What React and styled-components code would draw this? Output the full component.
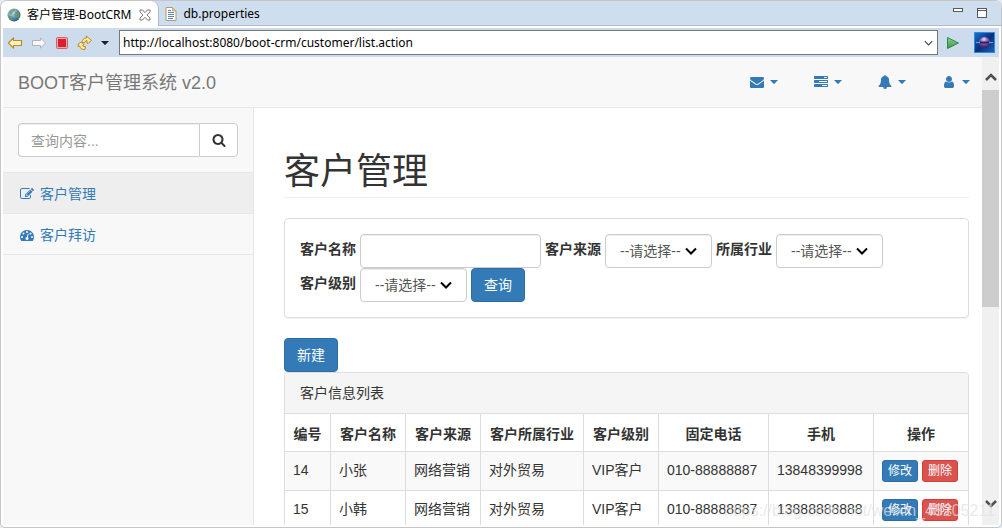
import React, { useState } from 'react'
import styled, { createGlobalStyle } from 'styled-components'

const uiFont = '"Noto Sans", "Noto Sans CJK SC", sans-serif'
const pageFont = '"Liberation Sans", Arial, "Noto Sans CJK SC", sans-serif'

const paths = {
  envelope:
    'M1792 710v794q0 66-47 113t-113 47h-1472q-66 0-113-47t-47-113v-794q44 49 101 87 362 246 497 345 57 42 92.5 65.5t94.5 48 110 24.5h2q51 0 110-24.5t94.5-48 92.5-65.5q170-123 498-345 57-39 100-87zm0-294q0 79-49 151t-122 123q-376 261-468 325-10 7-42.5 31t-54 38.5-52 32.5-57.5 27-50 9h-2q-23 0-50-9t-57.5-27-52-32.5-54-38.5-42.5-31q-91-64-262-182.5t-205-142.5q-62-42-117-115.5t-55-136.5q0-78 41.5-130t118.5-52h1472q65 0 112.5 47t47.5 113z',
  tasks:
    'M1024 1408h640v-128h-640v128zm-384-512h1024v-128h-1024v128zm640-512h384v-128h-384v128zm512 832v256q0 26-19 45t-45 19h-1664q-26 0-45-19t-19-45v-256q0-26 19-45t45-19h1664q26 0 45 19t19 45zm0-512v256q0 26-19 45t-45 19h-1664q-26 0-45-19t-19-45v-256q0-26 19-45t45-19h1664q26 0 45 19t19 45zm0-512v256q0 26-19 45t-45 19h-1664q-26 0-45-19t-19-45v-256q0-26 19-45t45-19h1664q26 0 45 19t19 45z',
  bell:
    'M912 1696q0-16-16-16-59 0-101.5-42.5t-42.5-101.5q0-16-16-16t-16 16q0 73 51.5 124.5t124.5 51.5q16 0 16-16zm816-288q0 52-38 90t-90 38h-448q0 106-75 181t-181 75-181-75-75-181h-448q-52 0-90-38t-38-90q50-42 91-88t85-119.5 74.5-158.5 50-206 19.5-260q0-152 117-282.5t307-158.5q-8-19-8-39 0-40 28-68t68-28 68 28 28 68q0 20-8 39 190 28 307 158.5t117 282.5q0 139 19.5 260t50 206 74.5 158.5 85 119.5 91 88z',
  user:
    'M1536 1399q0 109-62.5 187t-150.5 78h-854q-88 0-150.5-78t-62.5-187q0-85 8.5-160.5t31.5-152 58.5-131 94-89 134.5-34.5q131 128 313 128t313-128q76 0 134.5 34.5t94 89 58.5 131 31.5 152 8.5 160.5zm-256-887q0 159-112.5 271.5t-271.5 112.5-271.5-112.5-112.5-271.5 112.5-271.5 271.5-112.5 271.5 112.5 112.5 271.5z',
  edit:
    'M888 1184l116-116-152-152-116 116v56h96v96h56zm440-720q-16-16-33 1l-350 350q-17 17-1 33t33-1l350-350q17-17 1-33zm80 594v190q0 119-84.5 203.5t-203.5 84.5h-832q-119 0-203.5-84.5t-84.5-203.5v-832q0-119 84.5-203.5t203.5-84.5h832q63 0 117 25 15 7 18 23 3 17-9 29l-49 49q-14 14-32 8-23-6-45-6h-832q-66 0-113 47t-47 113v832q0 66 47 113t113 47h832q66 0 113-47t47-113v-126q0-13 9-22l64-64q15-15 35-7t20 29zm-96-738l288 288-672 672h-288v-288zm444 132l-92 92-288-288 92-92q28-28 68-28t68 28l152 152q28 28 28 68t-28 68z',
  dashboard:
    'M384 1152q0-53-37.5-90.5t-90.5-37.5-90.5 37.5-37.5 90.5 37.5 90.5 90.5 37.5 90.5-37.5 37.5-90.5zm192-448q0-53-37.5-90.5t-90.5-37.5-90.5 37.5-37.5 90.5 37.5 90.5 90.5 37.5 90.5-37.5 37.5-90.5zm428 481l101-382q6-26-7.5-48.5t-38.5-29.5-48 6.5-30 39.5l-101 382q-60 5-107 43.5t-63 98.5q-20 77 20 146t117 89 146-20 89-117q16-60-6-117t-72-91zm660-33q0-53-37.5-90.5t-90.5-37.5-90.5 37.5-37.5 90.5 37.5 90.5 90.5 37.5 90.5-37.5 37.5-90.5zm-640-640q0-53-37.5-90.5t-90.5-37.5-90.5 37.5-37.5 90.5 37.5 90.5 90.5 37.5 90.5-37.5 37.5-90.5zm448 192q0-53-37.5-90.5t-90.5-37.5-90.5 37.5-37.5 90.5 37.5 90.5 90.5 37.5 90.5-37.5 37.5-90.5zm320 448q0 261-141 483-19 29-54 29h-1402q-35 0-54-29-141-221-141-483 0-182 71-348t191-286 286-191 348-71 348 71 286 191 191 286 71 348z',
  search:
    'M1216 832q0-185-131.5-316.5t-316.5-131.5-316.5 131.5-131.5 316.5 131.5 316.5 316.5 131.5 316.5-131.5 131.5-316.5zm512 832q0 52-38 90t-90 38q-54 0-90-38l-343-342q-179 124-399 124-143 0-273.5-55.5t-225-150-150-225-55.5-273.5 55.5-273.5 150-225 225-150 273.5-55.5 273.5 55.5 225 150 150 225 55.5 273.5q0 220-124 399l343 343q37 37 37 90z',
}

const Icon = ({ name }) => (
  <svg width="14" height="14" viewBox="0 0 1792 1792" fill="currentColor" aria-hidden="true">
    <path d={paths[name]} />
  </svg>
)

const Caret = ({ size = 8 }) => (
  <svg width={size} height={size / 2} viewBox="0 0 8 4" fill="currentColor" aria-hidden="true">
    <path d="M0 0h8L4.400 3.800q-0.400 0.300-0.800 0z" />
  </svg>
)

const Globe = () => (
  <svg width="14" height="14" viewBox="0 0 14 14" aria-hidden="true">
    <defs>
      <radialGradient id="sea" cx="0.35" cy="0.3" r="0.75">
        <stop offset="0" stopColor="#d8ecf6" />
        <stop offset="0.45" stopColor="#6fa3c8" />
        <stop offset="1" stopColor="#2c5480" />
      </radialGradient>
    </defs>
    <circle cx="7" cy="7" r="6.5" fill="url(#sea)" />
    <path d="M2 3.5Q4 1 7 1l1 1.500-2 1.500-1 2-2 1zM8.500 4l3 .5 1.300 3-1.500 3.500-2-2-1.800-2zM3 8l2.500 1 .5 2-1 1.500Q2.500 11 2 9z" fill="#6f9a55" opacity="0.8" />
  </svg>
)

const FileIcon = () => (
  <svg width="12" height="14" viewBox="0 0 12 14" aria-hidden="true">
    <path d="M1 .5h6.500l3.500 3.500v9.500H1z" fill="#fdfdf6" stroke="#b09c6c" />
    <path d="M7.500 .5v3.500H11z" fill="#e9d9a4" stroke="#b09c6c" strokeWidth="0.7" />
    <path d="M3 3.500h3M3 5.500h6M3 7.500h6M3 9.500h6M3 11.500h5" stroke="#5d82c0" />
  </svg>
)

const CloseIcon = () => (
  <svg width="12" height="12" viewBox="0 0 12 12" fill="#fff" stroke="#6b6b6b" strokeWidth="0.9" aria-hidden="true">
    <path d="M1 1h2.500L6 3.700 8.500 1H11v2L8 6l3 3v2H8.500L6 8.300 3.500 11H1V9l3-3-3-3z" />
  </svg>
)

const Arrow = ({ forward }) => (
  <svg width="16" height="14" viewBox="0 0 16 14" aria-hidden="true">
    {forward ? (
      <path d="M14.500 7L9.500 1.800V4.500H1.500V9.500H9.500V12.200z" fill="#f7f7f7" stroke="#b0b4b8" strokeLinejoin="round" />
    ) : (
      <path d="M1.500 7L6.500 1.800V4.500H14.500V9.500H6.500V12.200z" fill="#fff3c4" stroke="#c08a1e" strokeWidth="1.200" strokeLinejoin="round" />
    )}
  </svg>
)

const StopIcon = () => (
  <svg width="14" height="14" viewBox="0 0 14 14" aria-hidden="true">
    <rect x="1.500" y="1.500" width="11" height="11" rx="1" fill="#f3a7ab" stroke="#c9676c" />
    <rect x="3" y="3" width="8" height="8" fill="#dc1f2d" />
  </svg>
)

const RefreshIcon = () => (
  <svg width="16" height="16" viewBox="0 0 16 16" fill="#ffe9a3" stroke="#c08a1e" strokeLinejoin="round" aria-hidden="true">
    <path d="M5 7.500Q5.500 3 9.500 3L9.300 1l2.200 1.800L14.500 5.500 11.500 8 10 8.500 10 5.500Q8 5.500 7.500 7.800z" />
    <path d="M1.500 8.500L4.500 7l2.500 3-1.500.5Q6 12 8.500 11.500l-.5 3Q3.500 15 2.800 11L1 11.500z" />
  </svg>
)

const PlayIcon = () => (
  <svg width="14" height="14" viewBox="0 0 14 14" aria-hidden="true">
    <defs>
      <linearGradient id="go" x1="0" y1="0" x2="0" y2="1">
        <stop offset="0" stopColor="#8fd08e" />
        <stop offset="1" stopColor="#37974c" />
      </linearGradient>
    </defs>
    <path d="M1.500 1.500L12.500 7 1.500 12.500z" fill="url(#go)" stroke="#2f8a48" strokeLinejoin="round" />
  </svg>
)

const EclipseIcon = () => (
  <svg width="21" height="21" viewBox="0 0 21 21" aria-hidden="true">
    <defs>
      <linearGradient id="space" x1="0" y1="0" x2="1" y2="1">
        <stop offset="0" stopColor="#1677d2" />
        <stop offset="0.5" stopColor="#0c2f7c" />
        <stop offset="1" stopColor="#1467c0" />
      </linearGradient>
      <radialGradient id="planet" cx="0.45" cy="0.2" r="0.9">
        <stop offset="0" stopColor="#e8d8f4" />
        <stop offset="0.35" stopColor="#8163b5" />
        <stop offset="1" stopColor="#24124f" />
      </radialGradient>
    </defs>
    <rect x="0.500" y="0.500" width="20" height="20" fill="url(#space)" stroke="#2b8be0" />
    <circle cx="10.500" cy="10.500" r="5.500" fill="url(#planet)" />
    <path d="M2 10.500h17" stroke="#8f9fe0" strokeWidth="0.9" />
    <path d="M6 10.500h9" stroke="#2a1658" strokeWidth="1.600" />
  </svg>
)

const Chevron = ({ width = 12, height = 8, stroke = '#000', strokeWidth = 2, up }) => (
  <svg width={width} height={height} viewBox="0 0 12 8" fill="none" stroke={stroke} strokeWidth={strokeWidth} aria-hidden="true">
    <path d={up ? 'M1 6.500L6 1.500l5 5' : 'M1 1.500L6 6.500l5-5'} />
  </svg>
)

const topLinks = [
  { key: 'envelope', label: '消息' },
  { key: 'tasks', label: '任务' },
  { key: 'bell', label: '通知' },
  { key: 'user', label: '用户' },
]

const menu = [
  { key: 'customer', label: '客户管理', icon: 'edit' },
  { key: 'visit', label: '客户拜访', icon: 'dashboard' },
]

const columns = [
  { label: '编号', width: 46 },
  { label: '客户名称', width: 75 },
  { label: '客户来源', width: 75 },
  { label: '客户所属行业', width: 103 },
  { label: '客户级别', width: 75 },
  { label: '固定电话', width: 110 },
  { label: '手机', width: 105 },
  { label: '操作', width: 94 },
]

const customers = [
  { id: 14, name: '小张', source: '网络营销', industry: '对外贸易', level: 'VIP客户', phone: '010-88888887', mobile: '13848399998' },
  { id: 15, name: '小韩', source: '网络营销', industry: '对外贸易', level: 'VIP客户', phone: '010-88888887', mobile: '13888888888' },
]

const SelectField = ({ id, label }) => (
  <Field>
    <FieldLabel htmlFor={id}>{label}</FieldLabel>
    <SelectWrap>
      <Select id={id}>
        <option>--请选择--</option>
      </Select>
      <Chevron />
    </SelectWrap>
  </Field>
)

const EditorTabs = () => (
  <TabBar>
    <Tab $active>
      <Globe />
      <span>客户管理-BootCRM</span>
      <CloseIcon />
    </Tab>
    <Tab>
      <FileIcon />
      <span>db.properties</span>
    </Tab>
    <WindowButtons>
      <MinButton type="button" aria-label="最小化" />
      <MaxButton type="button" aria-label="最大化" />
    </WindowButtons>
  </TabBar>
)

const BrowserBar = () => {
  const [url, setUrl] = useState('http://localhost:8080/boot-crm/customer/list.action')
  return (
    <Toolbar>
      <ToolButton type="button" aria-label="后退"><Arrow /></ToolButton>
      <ToolButton type="button" aria-label="前进"><Arrow forward /></ToolButton>
      <ToolButton type="button" aria-label="停止"><StopIcon /></ToolButton>
      <ToolButton type="button" aria-label="刷新"><RefreshIcon /></ToolButton>
      <ToolButton type="button" aria-label="更多"><Caret /></ToolButton>
      <AddressBox>
        <input aria-label="地址" value={url} onChange={(e) => setUrl(e.target.value)} />
        <Chevron width={9} height={6} stroke="#444" strokeWidth={1.5} />
      </AddressBox>
      <GoGroup>
        <ToolButton type="button" aria-label="转到"><PlayIcon /></ToolButton>
        <EclipseIcon />
      </GoGroup>
    </Toolbar>
  )
}

const CustomerTable = () => (
  <Table>
    <colgroup>
      {columns.map((col) => <col key={col.label} width={col.width} />)}
    </colgroup>
    <thead>
      <tr>
        {columns.map((col) => <th key={col.label}>{col.label}</th>)}
      </tr>
    </thead>
    <tbody>
      {customers.map((row) => (
        <tr key={row.id}>
          <td>{row.id}</td>
          <td>{row.name}</td>
          <td>{row.source}</td>
          <td>{row.industry}</td>
          <td>{row.level}</td>
          <td>{row.phone}</td>
          <td>{row.mobile}</td>
          <td>
            <Actions>
              <Button type="button" $small>修改</Button>
              <Button type="button" $small $danger>删除</Button>
            </Actions>
          </td>
        </tr>
      ))}
    </tbody>
  </Table>
)

const App = () => {
  return (
    <>
      <GlobalStyle />
      <Window>
        <EditorTabs />
        <BrowserBar />
        <Viewport>
          <Page>
            <Navbar>
              <Brand href="#">BOOT客户管理系统 v2.0</Brand>
              <TopLinks>
                {topLinks.map((item) => (
                  <TopLink key={item.key} href="#" aria-label={item.label}>
                    <Icon name={item.key} />
                    <Caret />
                  </TopLink>
                ))}
              </TopLinks>
            </Navbar>
            <Body>
              <Sidebar>
                <SidebarSearch>
                  <input aria-label="查询内容" placeholder="查询内容..." />
                  <button type="button" aria-label="搜索"><Icon name="search" /></button>
                </SidebarSearch>
                {menu.map((item, i) => (
                  <MenuLink key={item.key} href="#" $active={i === 0}>
                    <Icon name={item.icon} />
                    {item.label}
                  </MenuLink>
                ))}
              </Sidebar>
              <Content>
                <Title>客户管理</Title>
                <FilterForm onSubmit={(e) => e.preventDefault()}>
                  <Field>
                    <FieldLabel htmlFor="custName">客户名称</FieldLabel>
                    <TextInput id="custName" />
                  </Field>
                  <SelectField id="custSource" label="客户来源" />
                  <SelectField id="custIndustry" label="所属行业" />
                  <SelectField id="custLevel" label="客户级别" />
                  <Button type="submit">查询</Button>
                </FilterForm>
                <Button type="button">新建</Button>
                <Panel>
                  <PanelHeading>客户信息列表</PanelHeading>
                  <CustomerTable />
                </Panel>
              </Content>
            </Body>
          </Page>
          <Scrollbar>
            <ScrollEnd><Chevron up height={9} stroke="#505050" strokeWidth={2.5} /></ScrollEnd>
            <ScrollTrack><ScrollThumb /></ScrollTrack>
            <ScrollEnd><Chevron height={9} stroke="#505050" strokeWidth={2.5} /></ScrollEnd>
          </Scrollbar>
        </Viewport>
        <Watermark>https://blog.csdn.net/weixin_43205211</Watermark>
      </Window>
    </>
  )
}

const GlobalStyle = createGlobalStyle`
  * {
    box-sizing: border-box;
  }
  body {
    margin: 0;
    background: #e3eaf5;
    font-family: ${pageFont};
    font-size: 14px;
    line-height: 20px;
    color: #333333;
  }
  button, input, select {
    font: inherit;
    color: inherit;
    margin: 0;
  }
  a {
    color: #337ab7;
    text-decoration: none;
  }
  svg {
    flex: none;
    display: block;
  }
`

const Window = styled.div`
  position: relative;
  display: flex;
  flex-direction: column;
  height: 100vh;
  overflow: hidden;
  background: #ffffff;
  border: 1px solid #c6c6c6;
  border-radius: 7px 7px 5px 5px;
`

const TabBar = styled.div`
  display: flex;
  flex: none;
  height: 27px;
  padding-bottom: 2px;
  font-family: ${uiFont};
  font-size: 12px;
  color: #000000;
  background: linear-gradient(#cfdeee 25px, #ffffff 25px);
`

const Tab = styled.div`
  display: flex;
  align-items: center;
  gap: 6px;
  padding: 2px 7px 0 6px;
  white-space: nowrap;
  background: ${({ $active }) => ($active ? '#ffffff' : 'transparent')};
  border-right: ${({ $active }) => ($active ? '1px solid #b4bccb' : '0')};
  border-bottom: ${({ $active }) => ($active ? '0' : '1px solid #b4bccb')};
  border-top-right-radius: ${({ $active }) => ($active ? '8px' : '0')};
  span {
    padding-right: 2px;
  }
`

const WindowButtons = styled.div`
  display: flex;
  flex: 1;
  justify-content: flex-end;
  gap: 14px;
  padding: 7px 14px 0 0;
  border-bottom: 1px solid #b4bccb;
`

const MinButton = styled.button`
  width: 10px;
  height: 4px;
  padding: 0;
  background: #ffffff;
  border: 1px solid #5a5a5a;
`

const MaxButton = styled(MinButton)`
  height: 10px;
  background: linear-gradient(#ffffff 1px, #5a5a5a 1px, #5a5a5a 2px, #ffffff 2px);
`

const Toolbar = styled.div`
  display: flex;
  flex: none;
  align-items: center;
  gap: 8px;
  height: 29px;
  margin: 0 2px;
  padding: 0 4px;
  color: #222222;
  background: #cddcec;
`

const ToolButton = styled.button`
  display: flex;
  padding: 0;
  background: none;
  border: 0;
`

const GoGroup = styled.div`
  display: flex;
  align-items: center;
  gap: 14px;
`

const AddressBox = styled.div`
  display: flex;
  flex: 1;
  align-items: center;
  height: 25px;
  margin-left: 2px;
  padding: 0 4px 0 3px;
  font-family: ${uiFont};
  font-size: 12px;
  color: #000000;
  background: #ffffff;
  border: 1px solid #777777;
  input {
    flex: 1;
    min-width: 0;
    padding: 0;
    border: 0;
    outline: 0;
  }
`

const Viewport = styled.div`
  display: flex;
  flex: 1;
  min-height: 0;
  margin: 0 2px 2px;
`

const Page = styled.div`
  display: flex;
  flex: 1;
  flex-direction: column;
  min-width: 0;
  overflow: hidden;
`

const Navbar = styled.nav`
  display: flex;
  flex: none;
  align-items: center;
  justify-content: space-between;
  height: 51px;
  padding: 0 12px 0 15px;
  background: #f8f8f8;
  border-bottom: 1px solid #e7e7e7;
`

const Brand = styled.a`
  padding-top: 2px;
  font-size: 18px;
  color: #777777;
`

const TopLinks = styled.div`
  display: flex;
  gap: 36px;
`

const TopLink = styled.a`
  display: flex;
  align-items: center;
  gap: 6px;
`

const Body = styled.div`
  display: flex;
  flex: 1;
`

const Sidebar = styled.aside`
  flex: none;
  width: 250px;
  background: #f8f8f8;
`

const SidebarSearch = styled.div`
  display: flex;
  padding: 15px;
  border-bottom: 1px solid #e7e7e7;
  input {
    flex: 1;
    min-width: 0;
    height: 34px;
    padding: 7px 12px 5px;
    background: #ffffff;
    border: 1px solid #cccccc;
    border-right: 0;
    border-radius: 4px 0 0 4px;
    box-shadow: inset 0 1px 1px rgba(0, 0, 0, 0.075);
  }
  input::placeholder {
    color: #999999;
  }
  button {
    display: flex;
    align-items: center;
    justify-content: center;
    width: 39px;
    padding: 0;
    background: #ffffff;
    border: 1px solid #cccccc;
    border-radius: 0 4px 4px 0;
  }
`

const MenuLink = styled.a`
  display: flex;
  align-items: center;
  gap: 6px;
  height: 41px;
  padding: 2px 17px 0;
  background: ${({ $active }) => ($active ? '#eeeeee' : 'transparent')};
  border-bottom: 1px solid #e7e7e7;
`

const Content = styled.main`
  flex: 1;
  min-width: 0;
  padding: 0 13px 0 30px;
  background: #ffffff;
  border-left: 1px solid #e7e7e7;
`

const Title = styled.h1`
  margin: 44px 0 20px;
  padding-bottom: 5px;
  font-size: 36px;
  font-weight: 400;
  line-height: 40px;
  border-bottom: 1px solid #eeeeee;
`

const FilterForm = styled.form`
  display: flex;
  flex-wrap: wrap;
  column-gap: 4px;
  margin-bottom: 20px;
  padding: 15px;
  border: 1px solid #dddddd;
  border-radius: 4px;
  box-shadow: 0 1px 1px rgba(0, 0, 0, 0.05);
`

const Field = styled.div`
  display: flex;
  align-items: center;
  gap: 4px;
`

const FieldLabel = styled.label`
  margin-bottom: 5px;
  font-weight: 700;
`

const TextInput = styled.input`
  width: 181px;
  height: 34px;
  padding: 6px 12px;
  color: #555555;
  background: #ffffff;
  border: 1px solid #cccccc;
  border-radius: 4px;
  box-shadow: inset 0 1px 1px rgba(0, 0, 0, 0.075);
`

const SelectWrap = styled.div`
  display: grid;
  align-items: center;
  > * {
    grid-area: 1 / 1;
  }
  svg {
    justify-self: end;
    margin-right: 15px;
    pointer-events: none;
  }
`

const Select = styled(TextInput).attrs({ as: 'select' })`
  width: 107px;
  padding: 0 14px;
  appearance: none;
`

const Button = styled.button`
  height: ${({ $small }) => ($small ? 22 : 34)}px;
  padding: 0 ${({ $small }) => ($small ? 5 : 12)}px;
  font-size: ${({ $small }) => ($small ? 12 : 14)}px;
  line-height: 20px;
  color: #ffffff;
  background: ${({ $danger }) => ($danger ? '#d9534f' : '#337ab7')};
  border: 1px solid ${({ $danger }) => ($danger ? '#d43f3a' : '#2e6da4')};
  border-radius: ${({ $small }) => ($small ? 3 : 4)}px;
  cursor: pointer;
`

const Panel = styled.section`
  overflow: hidden;
  border: 1px solid #dddddd;
  border-radius: 4px;
`

const PanelHeading = styled.div`
  padding: 10px 15px;
  background: #f5f5f5;
  border-bottom: 1px solid #dddddd;
`

const Table = styled.table`
  width: 100%;
  border-spacing: 0;
  white-space: nowrap;
  th, td {
    height: 39px;
    padding: 8px;
    border: 0 solid #dddddd;
    border-width: 0 1px 1px 0;
  }
  th {
    height: 38px;
    padding: 10px 8px 7px;
  }
  td {
    vertical-align: top;
  }
  th:last-child, td:last-child {
    border-right: 0;
  }
  tbody tr:nth-child(odd) {
    background: #f9f9f9;
  }
`

const Actions = styled.div`
  display: flex;
  gap: 4px;
`

const Scrollbar = styled.div`
  display: flex;
  flex: none;
  flex-direction: column;
  width: 17px;
  background: #f0f0f0;
`

const ScrollEnd = styled.div`
  display: flex;
  flex: none;
  align-items: center;
  justify-content: center;
  height: 33px;
  padding-top: 8px;
  &:last-child {
    padding: 0 0 10px;
  }
`

const ScrollTrack = styled.div`
  flex: 1;
`

const ScrollThumb = styled.div`
  height: 54%;
  background: #cdcdcd;
`

const Watermark = styled.div`
  position: absolute;
  right: 6px;
  bottom: 6px;
  font-size: 16px;
  color: rgba(225, 225, 225, 0.7);
  pointer-events: none;
`

export default App
